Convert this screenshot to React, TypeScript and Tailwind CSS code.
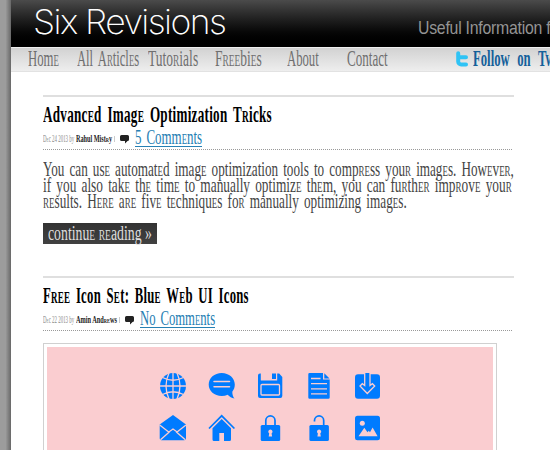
import { Fragment, useLayoutEffect, useRef, useState, type ReactNode } from "react";

/** A single line of text, condensed horizontally to fill its column. */
function Fit({ text, className = "", plain = false }: { text: string; className?: string; plain?: boolean }) {
  const box = useRef<HTMLSpanElement>(null);
  const line = useRef<HTMLSpanElement>(null);
  const [scale, setScale] = useState(1);
  useLayoutEffect(() => {
    if (box.current && line.current) setScale(box.current.offsetWidth / line.current.offsetWidth);
  }, []);
  return (
    <span ref={box} className={`block shrink-0 whitespace-nowrap leading-none ${className}`}>
      <span ref={line} className="inline-block origin-left align-top" style={{ transform: `scaleX(${scale})` }}>
        {plain ? text : <Quirky text={text} />}
      </span>
    </span>
  );
}

/** The display face draws e and r as small capitals. */
function Quirky({ text }: { text: string }) {
  return (
    <>
      {text.split(/([er]+)/).map((part, i) =>
        /^[er]+$/.test(part) ? (
          <span key={i} className="[font-variant-caps:small-caps]">{part}</span>
        ) : (
          <Fragment key={i}>{part}</Fragment>
        ),
      )}
    </>
  );
}

function Icon({ children }: { children: ReactNode }) {
  return (
    <svg viewBox="0 0 28 28" className="size-7 fill-[#007bff]">
      {children}
    </svg>
  );
}

const cut = "fill-none stroke-[#facdd0]";

function Icons() {
  return (
    <div className="grid grid-cols-[repeat(5,28px)] gap-x-[21px] gap-y-[14px]">
      <Icon>
        <circle cx="14" cy="14" r="13" />
        <path className={cut} strokeWidth="1.3" d="M14 1v26M1 14h26M3.5 5.5Q14 11 24.5 5.5M3.5 22.5Q14 17 24.5 22.5M10 1Q4 14 10 27M18 1Q24 14 18 27" />
      </Icon>
      <Icon>
        <path d="M13.7 1C6.4 1 .7 6 .7 12.6S6.4 24 13.7 24c2.2 0 4.2-.4 6-1.2 1.7 2 4 3.2 6.8 3.8-1.500-1.700-2.200-4-2.200-6.800 1.600-2 2.500-4.400 2.500-7.200C26.800 6 21 1 13.700 1Z" />
        <path className={cut} strokeWidth="1.500" strokeLinecap="round" d="M6 9.500h15.500M6 14.800h15.500" />
      </Icon>
      <Icon>
        <path d="M3 1.500h.8v7h16.400v-7h2L25.300 5v19a2 2 0 0 1-2 2H3a2 2 0 0 1-2-2V3.500a2 2 0 0 1 2-2Z" />
        <path d="M15 1.500h4v5.500h-4Z" />
        <rect className={cut} x="4" y="12.500" width="18.500" height="10.500" rx="1" strokeWidth="1.300" />
      </Icon>
      <Icon>
        <path d="M3.500 1H17v6.500h6.700v18a1.300 1.300 0 0 1-1.300 1.300H3.500a1.300 1.300 0 0 1-1.200-1.300V2.200A1.200 1.200 0 0 1 3.500 1ZM18.300 1.200l5.200 5.200h-5.200Z" />
        <path className={cut} strokeWidth="1.300" d="M5 6.500h9.500M5 11.700h16M5 16.800h16M5 21.800h16" />
      </Icon>
      <Icon>
        <rect x="0" y="2.300" width="25" height="24.400" rx="3" />
        <path className="fill-[#007bff] stroke-[#facdd0]" strokeWidth="1.300" d="M9.700 1v12.500L7.300 11.700 5 14l7.300 7.500L19.700 14l-2.300-2.300L15 13.500V1" />
      </Icon>
      <Icon>
        <path d="M14 1 27 10.500v14a1.700 1.700 0 0 1-1.700 1.700H2.400A1.700 1.700 0 0 1 .7 24.500v-14Z" />
        <path className={cut} strokeWidth="1.300" d="M.7 11 10 18.300 1.500 25.700M27 11l-9.300 7.300 8.600 7.400M9.500 18.200 14 15l4.500 3.200" />
      </Icon>
      <Icon>
        <path className="fill-none stroke-[#007bff]" strokeWidth="1.700" d="M1 14.500 13.700 1.800 26.400 14.500" />
        <path d="M13.700 5 23 14.300V25.500a1.500 1.500 0 0 1-1.500 1.500H16v-8h-4.700v8H6a1.500 1.500 0 0 1-1.500-1.500V14.300Z" />
      </Icon>
      <Icon>
        <path className="fill-none stroke-[#007bff]" strokeWidth="1.700" d="M8.800 12V6.500a4.600 4.600 0 0 1 9.200 0V12" />
        <rect x="3.700" y="11" width="19.500" height="16" rx="1.500" />
        <path className="fill-[#facdd0]" d="M13.400 15.500a2.200 2.200 0 0 1 1.200 4l.5 3h-3.400l.5-3a2.200 2.200 0 0 1 1.200-4Z" />
      </Icon>
      <Icon>
        <path className="fill-none stroke-[#007bff]" strokeWidth="1.700" d="M8.500 7.500v-1a4.600 4.600 0 0 1 9.200 0V12" />
        <rect x="3.400" y="11" width="19.500" height="16" rx="1.500" />
        <path className="fill-[#facdd0]" d="M13.100 15.500a2.200 2.200 0 0 1 1.200 4l.5 3h-3.400l.5-3a2.200 2.200 0 0 1 1.200-4Z" />
      </Icon>
      <Icon>
        <rect x="0" y="1.700" width="25" height="24.500" rx="2.500" />
        <circle className="fill-[#facdd0]" cx="7.300" cy="9.300" r="2.500" />
        <path className="fill-[#facdd0]" d="m3.500 22.300 5.800-8.600 3.200 4.600 1.300-1.500 1.200 1.400 2.600-4.800 5 8.900Z" />
      </Icon>
    </div>
  );
}

function Bubble() {
  return (
    <svg viewBox="0 0 10 9" className="h-[9px] w-[10px] fill-[#222]">
      <path d="M1.500 0h6A1.500 1.500 0 0 1 9 1.500v3A1.500 1.500 0 0 1 7.500 6L5 8.500V6H1.500A1.500 1.500 0 0 1 0 4.500v-3A1.500 1.500 0 0 1 1.500 0Z" />
    </svg>
  );
}

function PostHead({ title, titleClass, date, author, authorClass, comments, commentsClass }: {
  title: string; titleClass: string; date: string; author: string; authorClass: string; comments: string; commentsClass: string;
}) {
  return (
    <header className="h-[55px] w-[471px] border-t-2 border-[#dfdfdf] pt-[5px]">
      <Fit text={title} className={`h-6 text-[24px] font-bold tracking-[0.5px] text-black [word-spacing:4px] ${titleClass}`} />
      <div className="flex h-[24px] w-[469px] border-b border-dotted border-[#999]">
        <Fit text={`${date} by`} className="mt-[8px] w-[31px] text-[10px] text-[#8a8a8a]" />
        <Fit text={author} className={`ml-[2px] mt-[8px] text-[10px] font-bold text-[#222] ${authorClass}`} />
        <span className="ml-[2px] mt-[10px] h-[6px] w-px bg-[#ccc]" />
        <span className="ml-[5px] mt-[9px]"><Bubble /></span>
        <a className={`ml-[5px] h-[21px] border-b border-[#2680b3] text-[#2680b3] ${commentsClass}`}>
          <Fit text={comments} className="w-full text-[22px] [word-spacing:3px]" />
        </a>
      </div>
    </header>
  );
}

export default function App() {
  return (
    <div className="flex h-[450px] w-[550px] overflow-hidden bg-white font-['Liberation_Serif',serif]">
      <div className="w-[11px] shrink-0 bg-linear-to-r from-[#9c9c9c] from-50% to-[#686868]" />
      <main className="w-[539px] shrink-0 overflow-hidden">
        <div className="flex h-[47px] bg-linear-to-b from-[#4b4b4b] to-black">
          <Fit plain text="Six Revisions" className="ml-[22px] mt-[5px] w-[192px] font-['Inter',sans-serif] text-[34px] font-extralight tracking-[-1.5px] text-white" />
          <Fit plain text="Useful Information for" className="ml-[193px] mt-[18px] w-[146px] font-['Liberation_Sans',sans-serif] text-[19px] tracking-[-0.3px] text-[#949494]" />
        </div>
        <nav className="flex h-[25px] border-b border-t border-b-[#e2e2e2] border-t-[#eee] bg-linear-to-b from-[#d2d2d2] to-[#eee] text-[23px] text-[#6f6f6f] [word-spacing:4px]">
          <Fit text="Home" className="ml-[17px] -mt-px w-[31px]" />
          <Fit text="All Articles" className="ml-[18px] -mt-px w-[62px]" />
          <Fit text="Tutorials" className="ml-[9px] -mt-px w-[50px]" />
          <Fit text="Freebies" className="ml-[17px] -mt-px w-[47px]" />
          <Fit text="About" className="ml-[25px] -mt-px w-[32px]" />
          <Fit text="Contact" className="ml-[28px] -mt-px w-[41px]" />
          <svg viewBox="0 0 12 16" className="ml-[68px] mt-[3px] h-4 w-3 shrink-0">
            <path className="fill-none stroke-[#2fc3f5]" strokeWidth="4" strokeLinecap="round" strokeLinejoin="round" d="M2.200 2.200v8.300a3 3 0 0 0 3 3H10M2.200 6.200H10" />
          </svg>
          <Fit text="Follow on Twitter" className="ml-[5px] -mt-px w-[106px] font-bold text-[#14609a] [word-spacing:8px]" />
        </nav>
        <article className="ml-8 mt-[23px] h-[181px]">
          <PostHead title="Advanced Image Optimization Tricks" titleClass="w-[229px]" date="Dec 24 2013" author="Rahul Mistry" authorClass="w-[36px]" comments="5 Comments" commentsClass="w-[67px]" />
          <p className="mt-[8px] text-[22px] text-[#444] [word-spacing:3px]">
            <Fit text="You can use automated image optimization tools to compress your images. However," className="h-4 w-[471px]" />
            <Fit text="if you also take the time to manually optimize them, you can further improve your" className="h-4 w-[469px]" />
            <Fit text="results. Here are five techniques for manually optimizing images." className="h-4 w-[364px]" />
          </p>
          <a className="mt-[17px] block h-[21px] w-[114px] bg-linear-to-b from-[#333] to-[#414141] pl-[5px] text-[20px] text-[#dedede]">
            <Fit text="continue reading »" className="w-[104px]" />
          </a>
        </article>
        <article className="ml-8">
          <PostHead title="Free Icon Set: Blue Web UI Icons" titleClass="w-[206px]" date="Dec 22 2013" author="Amin Andrews" authorClass="w-[41px]" comments="No Comments" commentsClass="w-[75px]" />
          <div className="mt-[12px] h-[120px] w-[454px] border border-[#d0d0d0] p-[3px]">
            <div className="h-full bg-[#facdd0] pl-[112px] pt-[25px]">
              <Icons />
            </div>
          </div>
        </article>
      </main>
    </div>
  );
}
